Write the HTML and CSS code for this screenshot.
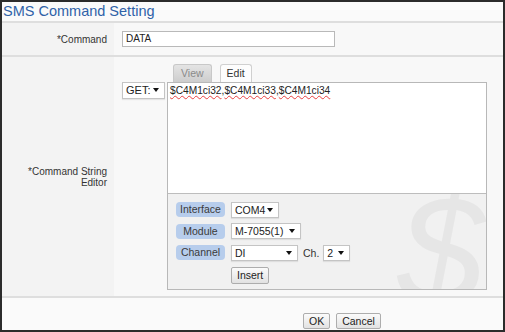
FILE: index.html
```html
<!DOCTYPE html>
<html lang="en">
<head>
    <meta charset="UTF-8">
    <title>SMS Command Setting</title>
    <link rel="stylesheet" href="styles.css">
</head>
<body>

    <div class="window">
        <!-- Título -->
        <div class="title">SMS Command Setting</div>

        <!-- Fila: comando -->
        <div class="row row-command">
            <div class="label">*Command</div>
            <div class="value">
                <div class="input">DATA</div>
            </div>
        </div>

        <!-- Fila: editor -->
        <div class="row row-editor">
            <div class="label">*Command String<br>Editor</div>
            <div class="value">
                <div class="editor">
                    <div class="tabs">
                        <div class="tab">View</div>
                        <div class="tab active">Edit</div>
                    </div>
                    <div class="select select-get">GET:<span class="arrow"></span></div>
                    <div class="box">
                        <div class="text"><span class="spell">$C4M1ci32</span>,<span class="spell">$C4M1ci33</span>,<span class="spell">$C4M1ci34</span></div>
                        <div class="panel">
                            <div class="watermark">$</div>
                            <div class="line">
                                <span class="pill">Interface</span>
                                <div class="select select-com">COM4<span class="arrow"></span></div>
                            </div>
                            <div class="line">
                                <span class="pill">Module</span>
                                <div class="select select-module">M-7055(1)<span class="arrow"></span></div>
                            </div>
                            <div class="line">
                                <span class="pill">Channel</span>
                                <div class="select select-di">DI<span class="arrow"></span></div>
                                <span class="ch">Ch.</span>
                                <div class="select select-ch">2<span class="arrow"></span></div>
                            </div>
                            <div class="line">
                                <span class="pill-space"></span>
                                <div class="button">Insert</div>
                            </div>
                        </div>
                    </div>
                </div>
            </div>
        </div>

        <!-- Botones -->
        <div class="footer">
            <div class="button">OK</div>
            <div class="button">Cancel</div>
        </div>
    </div>

</body>
</html>
```

FILE: styles.css
```css
/* Estilos generales */
body {
    margin: 0;
    padding: 0;
    font-family: 'Liberation Sans', Arial, sans-serif;
    font-size: 10px;
    color: #333;
}

.window {
    box-sizing: border-box;
    width: 505px;
    height: 332px;
    border: 2px solid #2b2b2b;
    background-color: #fafafa;
    display: flex;
    flex-direction: column;
}

/* Título */
.title {
    height: 19px;
    padding-left: 1px;
    font-size: 14.5px;
    line-height: 18px;
    color: #2f62a8;
    border-bottom: 2px solid #dedede;
}

/* Filas */
.row {
    display: flex;
    border-bottom: 2px solid #dedede;
}

.label {
    width: 105px;
    padding-right: 7px;
    background-color: #f3f3f3;
    text-align: right;
    display: flex;
    align-items: center;
    justify-content: flex-end;
    line-height: 11px;
}

.value {
    flex: 1;
    background-color: #f8f8f8;
    padding-left: 8px;
}

.row-command {
    height: 32px;
}

.row-command .value {
    display: flex;
    align-items: center;
}

.input {
    box-sizing: border-box;
    width: 213px;
    height: 16px;
    padding-left: 3px;
    background-color: #fff;
    border: 1px solid #b9b9b9;
    line-height: 14px;
    color: #222;
}

.row-editor {
    height: 239px;
}

.row-editor .value {
    padding-top: 7px;
}

/* Editor */
.editor {
    display: grid;
    grid-template-columns: 43px 320px;
    column-gap: 2px;
}

.tabs {
    grid-column: 2;
    display: flex;
    gap: 8px;
    padding-left: 6px;
    height: 18px;
    align-items: flex-end;
}

.tab {
    box-sizing: border-box;
    height: 18px;
    padding: 0 7px;
    border: 1px solid #c8c8c8;
    border-bottom: none;
    border-radius: 3px 3px 0 0;
    line-height: 17px;
    font-size: 10.5px;
    color: #8a8a8a;
    background: linear-gradient(#e4e4e4, #cdcdcd);
}

.tab.active {
    color: #333;
    background: #fdfdfd;
    border-color: #d0d0d0;
    padding: 0 6px;
}

.select {
    box-sizing: border-box;
    position: relative;
    height: 16px;
    padding-left: 3px;
    background-color: #fff;
    border: 1px solid #c4c4c4;
    box-shadow: 0 1px 1px rgba(0, 0, 0, 0.08);
    line-height: 14px;
    font-size: 10.5px;
    color: #222;
}

.arrow {
    position: absolute;
    right: 5px;
    top: 5px;
    border-left: 3px solid transparent;
    border-right: 3px solid transparent;
    border-top: 4px solid #111;
}

.select-get {
    grid-column: 1;
    grid-row: 2;
    height: 17px;
    font-size: 11px;
}

.box {
    grid-column: 2;
    grid-row: 2;
    box-sizing: border-box;
    height: 208px;
    border: 1px solid #b8b8b8;
    display: flex;
    flex-direction: column;
}

.text {
    height: 108px;
    padding: 1px 2px;
    background-color: #fff;
    border-bottom: 1px solid #bdbdbd;
    font-size: 10.2px;
    line-height: 14px;
    color: #222;
}

.spell {
    text-decoration: underline wavy #e84040;
    text-decoration-thickness: 1px;
    text-underline-offset: 1px;
}

/* Panel de inserción */
.panel {
    flex: 1;
    position: relative;
    overflow: hidden;
    background-color: #f1f1f1;
    padding: 8px 0 0 8px;
    display: flex;
    flex-direction: column;
    gap: 6.5px;
}

.watermark {
    position: absolute;
    right: 2px;
    top: -21px;
    font-size: 155px;
    font-style: italic;
    line-height: 1;
    color: #e6e6e6;
}

.line {
    position: relative;
    display: flex;
    align-items: center;
    gap: 6px;
    height: 15px;
}

.pill {
    width: 49px;
    height: 15px;
    border-radius: 4px;
    background-color: #b7cdec;
    text-align: center;
    line-height: 15px;
    font-size: 10.5px;
    color: #3a3a3a;
}

.pill-space {
    width: 49px;
}

.select-com {
    width: 48px;
}

.select-module {
    width: 70px;
}

.select-di {
    width: 67px;
}

.select-ch {
    width: 27px;
    margin-left: -2px;
}

.ch {
    margin-left: -1px;
    font-size: 10.5px;
}

.line:last-child {
    height: 17px;
    margin-top: 0.5px;
}

.button {
    box-sizing: border-box;
    height: 17px;
    padding: 0 5px;
    border: 1px solid #adadad;
    border-radius: 2px;
    background: linear-gradient(#fbfbfb, #e2e2e2);
    line-height: 15px;
    font-size: 10.5px;
    color: #222;
}

/* Botones inferiores */
.footer {
    flex: 1;
    background-color: #fafafa;
    display: flex;
    gap: 6px;
    padding: 15px 0 0 301px;
}

.footer .button {
    height: 16px;
    line-height: 14px;
}
```
